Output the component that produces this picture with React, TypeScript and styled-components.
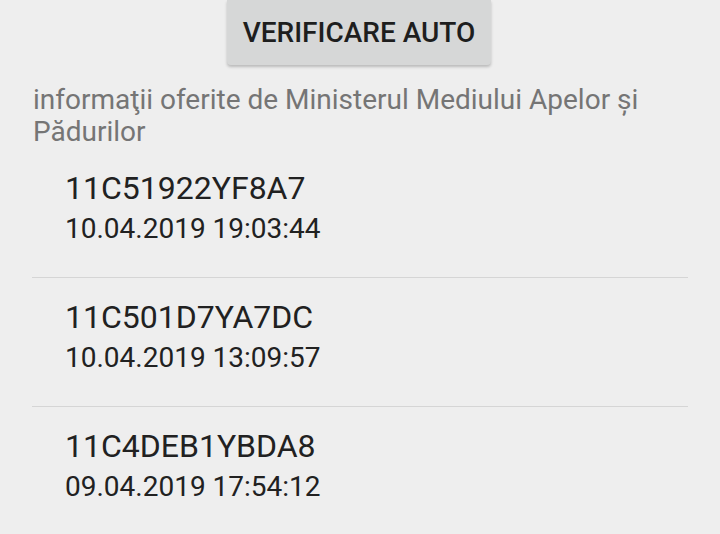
import React, { FC } from 'react'
import styled, { createGlobalStyle } from 'styled-components'

const GlobalStyle = createGlobalStyle`
  html, body {
    margin: 0;
    padding: 0;
    background: #eeeeee;
    font-family: Roboto, 'Noto Sans', sans-serif;
  }
`

const Screen = styled.div`
  display: flex;
  flex-direction: column;
  width: 720px;
  height: 534px;
  overflow: hidden;
  background: #eeeeee;
`

const Toolbar = styled.div`
  display: flex;
  justify-content: center;
`

const Button = styled.button`
  width: 264px;
  height: 65px;
  margin-left: -2px;
  padding: 0;
  border: none;
  border-radius: 0 0 4px 4px;
  background: #d6d7d7;
  box-shadow: 0 2px 3px rgba(0, 0, 0, 0.22);
  color: #1e1e1e;
  font-family: Roboto, sans-serif;
  font-weight: 500;
  font-size: 28px;
  text-transform: uppercase;
`

const Source = styled.p`
  margin: 19px 32px 0 33px;
  font-size: 28px;
  line-height: 32px;
  color: #757575;
`

const List = styled.ul`
  list-style: none;
  margin: 1px 32px 0;
  padding: 0;
`

const Item = styled.li`
  display: flex;
  flex-direction: column;
  padding: 19px 0 27px 33px;

  & + & {
    border-top: 1px solid #d5d5d5;
  }
`

const Code = styled.span`
  font-size: 32px;
  line-height: 40px;
  color: #212121;
`

const Stamp = styled.span`
  font-size: 28px;
  line-height: 42px;
  color: #212121;
`

type Check = { code: string; date: string }

const checks: Check[] = [
  { code: '11C51922YF8A7', date: '10.04.2019 19:03:44' },
  { code: '11C501D7YA7DC', date: '10.04.2019 13:09:57' },
  { code: '11C4DEB1YBDA8', date: '09.04.2019 17:54:12' },
]

const App: FC = () => (
  <Screen>
    <GlobalStyle />
    <Toolbar>
      <Button>Verificare auto</Button>
    </Toolbar>
    <Source>informaţii oferite de Ministerul Mediului Apelor și Pădurilor</Source>
    <List>
      {checks.map((c) => (
        <Item key={c.code}>
          <Code>{c.code}</Code>
          <Stamp>{c.date}</Stamp>
        </Item>
      ))}
    </List>
  </Screen>
)

export default App
